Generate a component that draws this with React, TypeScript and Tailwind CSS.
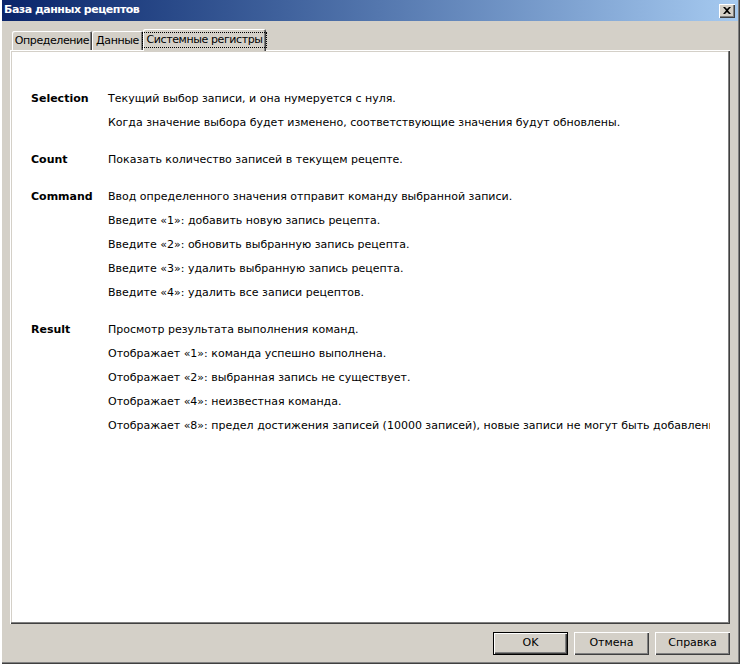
const FONT = { fontFamily: '"DejaVu Sans", "Liberation Sans", sans-serif' };

const raised =
  "shadow-[inset_1px_1px_#ffffff,inset_-1px_-1px_#404040,inset_-2px_-2px_#808080]";

type Group = { label: string; lines: string[] };

const groups: Group[] = [
  {
    label: "Selection",
    lines: [
      "Текущий выбор записи, и она нумеруется с нуля.",
      "Когда значение выбора будет изменено, соответствующие значения будут обновлены.",
    ],
  },
  {
    label: "Count",
    lines: ["Показать количество записей в текущем рецепте."],
  },
  {
    label: "Command",
    lines: [
      "Ввод определенного значения отправит команду выбранной записи.",
      "Введите «1»: добавить новую запись рецепта.",
      "Введите «2»: обновить выбранную запись рецепта.",
      "Введите «3»: удалить выбранную запись рецепта.",
      "Введите «4»: удалить все записи рецептов.",
    ],
  },
  {
    label: "Result",
    lines: [
      "Просмотр результата выполнения команд.",
      "Отображает «1»: команда успешно выполнена.",
      "Отображает «2»: выбранная запись не существует.",
      "Отображает «4»: неизвестная команда.",
      "Отображает «8»: предел достижения записей (10000 записей), новые записи не могут быть добавлены.",
    ],
  },
];

function Tab({ label, width, active }: { label: string; width: string; active?: boolean }) {
  if (active) {
    return (
      <div
        className={`${width} relative z-10 -mb-px flex h-[22px] items-start justify-center whitespace-nowrap rounded-t-[2px] bg-[#d4d0c8] pt-[3px] shadow-[inset_1px_1px_#ffffff,inset_-1px_0_#404040,inset_-2px_0_#808080]`}
      >
        <span className="border border-dotted border-black px-[3px] leading-[14px] tracking-[-0.4px]">
          {label}
        </span>
      </div>
    );
  }
  return (
    <div
      className={`${width} flex h-[19px] items-start justify-center whitespace-nowrap rounded-t-[2px] bg-[#d4d0c8] pt-[3px] shadow-[inset_1px_1px_#ffffff,inset_-1px_0_#404040,inset_-2px_0_#808080]`}
    >
      <span className="leading-[14px] tracking-[-0.4px]">{label}</span>
    </div>
  );
}

function Button({ label, primary }: { label: string; primary?: boolean }) {
  return (
    <button
      type="button"
      className={`h-[23px] w-[75px] bg-[#d4d0c8] text-[11px] text-black ${
        primary
          ? "border border-black shadow-[inset_1px_1px_#ffffff,inset_-1px_-1px_#404040,inset_-2px_-2px_#808080]"
          : raised
      }`}
    >
      {label}
    </button>
  );
}

export default function App() {
  return (
    <div
      style={FONT}
      className="relative flex h-[664px] w-[740px] flex-col bg-[#d4d0c8] text-[11px] text-black shadow-[inset_2px_0_#ffffff,inset_-1px_-1px_#404040,inset_-2px_-2px_#808080]"
    >
      <div className="mx-[2px] flex h-[21px] items-center justify-between bg-gradient-to-r from-[#0a246a] to-[#a6caf0] pl-[2px] pr-[3px]">
        <span className="text-[11px] font-bold tracking-[-0.5px] text-white">База данных рецептов</span>
        <div
          className={`flex h-[14px] w-[16px] items-center justify-center bg-[#d4d0c8] ${raised}`}
        >
          <svg width="8" height="7" viewBox="0 0 8 7" className="-mt-px">
            <path d="M0 0h2l2 2 2-2h2L5 3.5 8 7H6L4 5 2 7H0l3-3.5z" fill="#000" />
          </svg>
        </div>
      </div>

      <div className="flex flex-1 flex-col px-[10px] pt-[7px]">
        <div className="flex h-[22px] items-end pl-[2px]">
          <Tab label="Определение" width="w-[80px]" />
          <Tab label="Данные" width="w-[51px]" />
          <Tab label="Системные регистры" width="w-[123px]" active />
        </div>

        <div className={`h-[574px] bg-[#d4d0c8] p-[2px] ${raised}`}>
          <div className="h-full bg-white pl-[19px] pr-[18px] pt-[35px]">
            <div className="flex flex-col gap-[13px] overflow-hidden">
              {groups.map((g) => (
                <div key={g.label} className="flex">
                  <div className="w-[77px] shrink-0 font-bold leading-[24px]">{g.label}</div>
                  <div className="flex min-w-0 flex-col">
                    {g.lines.map((l) => (
                      <div key={l} className="h-[24px] whitespace-nowrap leading-[24px]">
                        {l}
                      </div>
                    ))}
                  </div>
                </div>
              ))}
            </div>
          </div>
        </div>

        <div className="mt-[8px] flex justify-end gap-[6px]">
          <Button label="OK" primary />
          <Button label="Отмена" />
          <Button label="Справка" />
        </div>
      </div>
    </div>
  );
}
